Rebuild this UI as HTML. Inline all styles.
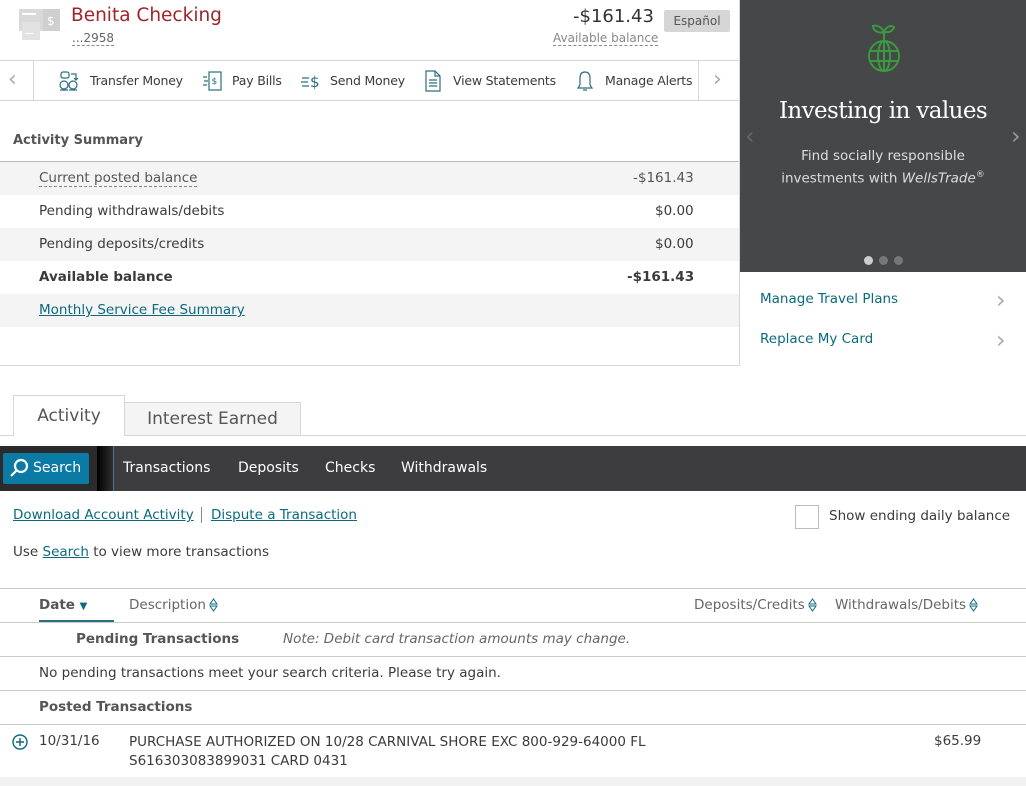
<!DOCTYPE html>
<html><head><meta charset="utf-8"><style>
*{margin:0;padding:0;box-sizing:border-box}
body{width:1026px;height:786px;overflow:hidden;background:#fff;font-family:"DejaVu Sans","Liberation Sans",sans-serif;font-size:13.5px;color:#3b3b3b;position:relative}
.a{position:absolute;white-space:nowrap}
.row{position:absolute;left:0;width:739px;height:33px}
.g{background:#f4f4f4}
.lnk{color:#0b6a7e;text-decoration:underline}
.hl{position:absolute;height:1px;background:#d6d6d6}
.nav{color:#3b3b3b;font-size:12.5px;letter-spacing:-0.2px}
.srt{display:inline-block;vertical-align:-3px;margin-left:3px}
</style></head><body>
<div class="a" style="left:739px;top:0;width:1px;height:366px;background:#d6d6d6"></div>
<div class="hl" style="left:0;top:365px;width:740px"></div>
<svg class="a" style="left:19px;top:9px" width="42" height="32"><rect x="0" y="0" width="30" height="22" fill="#d9d9d9"/><rect x="24" y="0" width="17" height="22" fill="#cfcfcf"/><text x="28" y="16" font-size="12" fill="#fff" font-family="DejaVu Sans">$</text><rect x="3" y="13" width="18" height="18" fill="#e2e2e2"/><rect x="3" y="4" width="14" height="2" fill="#fff"/><rect x="6" y="24" width="8" height="1" fill="#fff"/></svg>
<div class="a" style="left:71px;top:5px;font-size:18.5px;color:#a0252a">Benita Checking</div>
<div class="a" style="left:72px;top:31px;font-size:12px;color:#666;border-bottom:1px dashed #888;line-height:14px">...2958</div>
<div class="a" style="left:573px;top:6px;font-size:18px;color:#333">-$161.43</div>
<div class="a" style="left:553px;top:31px;font-size:12px;color:#888;border-bottom:1px dashed #888;line-height:14px">Available balance</div>
<div class="a" style="left:664px;top:10px;width:66px;height:22px;background:#d6d6d6;border-radius:2px;font-size:12px;color:#555;text-align:center;line-height:22px">Español</div>
<div class="hl" style="left:0;top:60px;width:739px"></div>
<div class="hl" style="left:0;top:100px;width:739px"></div>
<div class="a" style="left:33px;top:61px;width:1px;height:39px;background:#d6d6d6"></div>
<div class="a" style="left:698px;top:61px;width:1px;height:39px;background:#d6d6d6"></div>
<div class="a" style="left:8px;top:67px;font-size:22px;color:#aaa">‹</div>
<div class="a" style="left:713px;top:67px;font-size:22px;color:#aaa">›</div>
<svg class="a" style="left:58px;top:70px" width="24" height="24" fill="none" stroke="#2a6f82" stroke-width="1.2"><rect x="3" y="2" width="8" height="6" rx="2"/><path d="M13 4h5v6M16 8l2 2 2-2"/><circle cx="6" cy="15" r="4"/><circle cx="15" cy="15" r="4"/><path d="M2 20h8M11 20h8"/></svg>
<div class="a nav" style="left:90px;top:73px">Transfer Money</div>
<svg class="a" style="left:202px;top:70px" width="22" height="22" fill="none" stroke="#2a6f82" stroke-width="1.2"><rect x="7" y="2" width="12" height="18"/><text x="9.5" y="14" font-size="9" fill="#2a6f82" stroke="none">$</text><path d="M1 7h4M2 11h4M1 15h4"/></svg>
<div class="a nav" style="left:232px;top:73px">Pay Bills</div>
<svg class="a" style="left:300px;top:70px" width="24" height="22" fill="none" stroke="#2a6f82" stroke-width="1.2"><path d="M2 8h7M1 12h7M2 16h7"/><text x="10" y="17" font-size="15" fill="#2a6f82" stroke="none">$</text></svg>
<div class="a nav" style="left:330px;top:73px">Send Money</div>
<svg class="a" style="left:424px;top:70px" width="18" height="22" fill="none" stroke="#2a6f82" stroke-width="1.2"><path d="M2 1h9l5 5v15H2z M11 1v5h5M5 10h8M5 13h8M5 16h8"/></svg>
<div class="a nav" style="left:453px;top:73px">View Statements</div>
<svg class="a" style="left:576px;top:70px" width="18" height="22" fill="none" stroke="#2a6f82" stroke-width="1.2"><path d="M9 2c-4 0-5 3-5 6v7l-2 3h14l-2-3V8c0-3-1-6-5-6zM7 20h4"/></svg>
<div class="a nav" style="left:605px;top:73px">Manage Alerts</div>
<div class="a" style="left:13px;top:133px;font-weight:bold;color:#555;font-size:13px">Activity Summary</div>
<div class="hl" style="left:0;top:161px;width:739px;background:#bbb"></div>
<div class="row g" style="top:162px"></div>
<div class="row g" style="top:228px"></div>
<div class="row g" style="top:294px"></div>
<div class="a" style="left:39px;top:170px;color:#555;border-bottom:1px dashed #888;line-height:16px">Current posted balance</div>
<div class="a" style="left:633px;top:170px;color:#555">-$161.43</div>
<div class="a" style="left:39px;top:203px">Pending withdrawals/debits</div>
<div class="a" style="left:655px;top:203px">$0.00</div>
<div class="a" style="left:39px;top:236px">Pending deposits/credits</div>
<div class="a" style="left:655px;top:236px">$0.00</div>
<div class="a" style="left:39px;top:269px;font-weight:bold">Available balance</div>
<div class="a" style="left:627px;top:269px;font-weight:bold">-$161.43</div>
<div class="a lnk" style="left:39px;top:302px">Monthly Service Fee Summary</div>
<div class="a" style="left:740px;top:0;width:286px;height:272px;background:#464749"></div>
<svg class="a" style="left:865px;top:18px" width="38" height="56" fill="none" stroke="#3b9a3f" stroke-width="2"><path d="M19 24v-10M19 14c-3-6-8-7-11-6 0 4 5 8 11 6zM19 14c2-6 8-7 10-5-1 4-5 6-10 5"/><circle cx="19" cy="38" r="15"/><ellipse cx="19" cy="38" rx="6" ry="15"/><path d="M4 33h30M4 43h30M19 23v30"/></svg>
<div class="a" style="left:740px;width:286px;top:98px;text-align:center;font-family:'DejaVu Serif','Liberation Serif',serif;font-size:23px;color:#fff;letter-spacing:-0.6px">Investing in values</div>
<div class="a" style="left:740px;width:286px;top:147px;text-align:center;color:#ddd;line-height:19px;font-size:13.5px">Find socially responsible<br>investments with <i>WellsTrade</i><sup style="font-size:9px">®</sup></div>
<div class="a" style="left:745px;top:122px;font-size:24px;color:#666">‹</div>
<div class="a" style="left:1011px;top:122px;font-size:24px;color:#999">›</div>
<div class="a" style="left:864px;top:256px;width:9px;height:9px;border-radius:50%;background:#ccc"></div>
<div class="a" style="left:879px;top:256px;width:9px;height:9px;border-radius:50%;background:#777"></div>
<div class="a" style="left:894px;top:256px;width:9px;height:9px;border-radius:50%;background:#777"></div>
<div class="a" style="left:760px;top:291px;color:#0b6a7e">Manage Travel Plans</div>
<div class="a" style="left:996px;top:286px;font-size:24px;color:#aaa">›</div>
<div class="a" style="left:760px;top:331px;color:#0b6a7e">Replace My Card</div>
<div class="a" style="left:996px;top:326px;font-size:24px;color:#aaa">›</div>
<div class="hl" style="left:0;top:435px;width:1026px"></div>
<div class="a" style="left:124px;top:402px;width:177px;height:34px;background:#f4f4f4;border:1px solid #d6d6d6;font-size:17px;color:#555;text-align:center;line-height:32px">Interest Earned</div>
<div class="a" style="left:13px;top:395px;width:112px;height:41px;background:#fff;border:1px solid #d6d6d6;border-bottom:none;font-size:17px;color:#555;text-align:center;line-height:40px">Activity</div>
<div class="a" style="left:0;top:446px;width:1026px;height:45px;background:#3d3d3f"></div>
<div class="a" style="left:0;top:446px;width:114px;height:45px;background:#2b2b2b;border-right:1px solid #4b6fa0"></div>
<div class="a" style="left:97px;top:446px;width:16px;height:45px;background:linear-gradient(90deg,#000,#2f2f2f)"></div>
<div class="a" style="left:3px;top:453px;width:86px;height:31px;background:#0b7aa5;border-radius:2px"></div>
<svg class="a" style="left:8px;top:458px" width="22" height="22" fill="none" stroke="#fff" stroke-width="2.2"><circle cx="13" cy="8" r="6"/><path d="M9 12L3 18"/></svg>
<div class="a" style="left:33px;top:460px;color:#fff;font-size:14px">Search</div>
<div class="a" style="left:123px;top:460px;color:#fff;font-size:14px">Transactions</div>
<div class="a" style="left:238px;top:460px;color:#fff;font-size:14px">Deposits</div>
<div class="a" style="left:325px;top:460px;color:#fff;font-size:14px">Checks</div>
<div class="a" style="left:401px;top:460px;color:#fff;font-size:14px">Withdrawals</div>
<div class="a lnk" style="left:13px;top:507px">Download Account Activity</div>
<div class="a" style="left:201px;top:507px;width:1px;height:16px;background:#888"></div>
<div class="a lnk" style="left:211px;top:507px">Dispute a Transaction</div>
<div class="a" style="left:795px;top:505px;width:24px;height:24px;border:1px solid #bbb;background:#fff"></div>
<div class="a" style="left:829px;top:508px">Show ending daily balance</div>
<div class="a" style="left:13px;top:544px">Use <span class="lnk">Search</span> to view more transactions</div>
<div class="hl" style="left:0;top:588px;width:1026px;background:#ccc"></div>
<div class="a" style="left:39px;top:597px;font-weight:bold;color:#555">Date <span style="color:#0b6a7e;font-size:10px">▼</span></div>
<div class="a" style="left:39px;top:620px;width:75px;height:2px;background:#2a6f82"></div>
<div class="a" style="left:129px;top:597px;color:#666">Description<svg class="srt" width="9" height="14" fill="none" stroke="#0b6a7e" stroke-width="1"><path d="M1 6L4.5 1 8 6zM1 8l3.5 5L8 8z"/></svg></div>
<div class="a" style="left:694px;top:597px;color:#666">Deposits/Credits<svg class="srt" width="9" height="14" fill="none" stroke="#0b6a7e" stroke-width="1"><path d="M1 6L4.5 1 8 6zM1 8l3.5 5L8 8z"/></svg></div>
<div class="a" style="left:835px;top:597px;color:#666">Withdrawals/Debits<svg class="srt" width="9" height="14" fill="none" stroke="#0b6a7e" stroke-width="1"><path d="M1 6L4.5 1 8 6zM1 8l3.5 5L8 8z"/></svg></div>
<div class="hl" style="left:0;top:622px;width:1026px;background:#ccc"></div>
<div class="a" style="left:76px;top:631px;font-weight:bold;color:#555">Pending Transactions</div>
<div class="a" style="left:283px;top:631px;font-style:italic;color:#666">Note: Debit card transaction amounts may change.</div>
<div class="hl" style="left:0;top:656px;width:1026px;background:#ccc"></div>
<div class="a" style="left:39px;top:665px">No pending transactions meet your search criteria. Please try again.</div>
<div class="hl" style="left:0;top:690px;width:1026px;background:#ccc"></div>
<div class="a" style="left:39px;top:699px;font-weight:bold;color:#555">Posted Transactions</div>
<div class="hl" style="left:0;top:724px;width:1026px;background:#ccc"></div>
<svg class="a" style="left:12px;top:734px" width="16" height="16" fill="none" stroke="#0b6a7e" stroke-width="1.4"><circle cx="8" cy="8" r="7"/><path d="M8 4v8M4 8h8"/></svg>
<div class="a" style="left:39px;top:733px">10/31/16</div>
<div class="a" style="left:129px;top:733px;line-height:19px">PURCHASE AUTHORIZED ON 10/28 CARNIVAL SHORE EXC 800-929-64000 FL<br>S616303083899031 CARD 0431</div>
<div class="a" style="left:934px;top:733px">$65.99</div>
<div class="a" style="left:0;top:777px;width:1026px;height:9px;background:#f2f2f2"></div>
</body></html>
